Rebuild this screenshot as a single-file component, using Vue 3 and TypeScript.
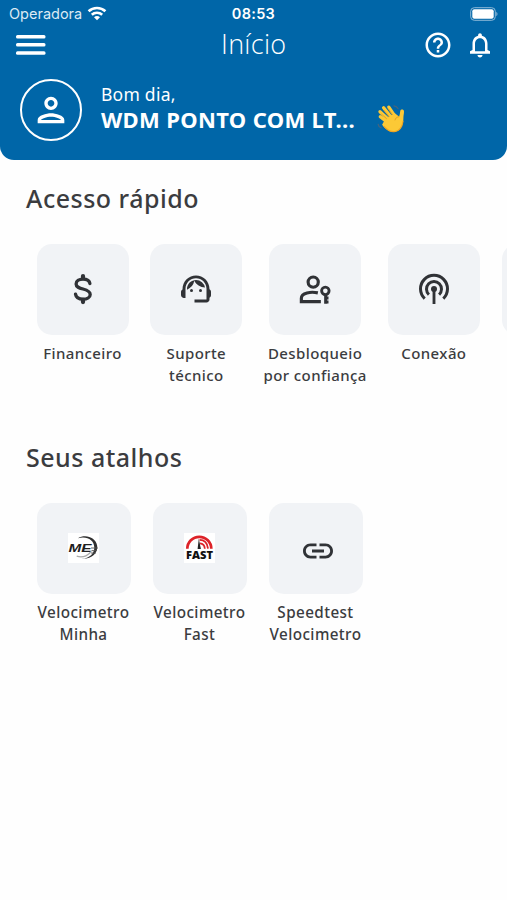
<script setup lang="ts">
type IconName = 'money' | 'agent' | 'personKey' | 'podcast' | 'me' | 'fast' | 'link'

interface Shortcut {
  icon: IconName
  lines: string[]
}

interface Section {
  title: string
  kind: 'quick' | 'links'
  items: Shortcut[]
}

const sections: Section[] = [
  {
    title: 'Acesso rápido',
    kind: 'quick',
    items: [
      { icon: 'money', lines: ['Financeiro'] },
      { icon: 'agent', lines: ['Suporte', 'técnico'] },
      { icon: 'personKey', lines: ['Desbloqueio', 'por confiança'] },
      { icon: 'podcast', lines: ['Conexão'] },
    ],
  },
  {
    title: 'Seus atalhos',
    kind: 'links',
    items: [
      { icon: 'me', lines: ['Velocimetro', 'Minha'] },
      { icon: 'fast', lines: ['Velocimetro', 'Fast'] },
      { icon: 'link', lines: ['Speedtest', 'Velocimetro'] },
    ],
  },
]
</script>

<template>
  <div class="screen">
    <header class="header">
      <div class="status">
        <div class="carrier">
          <span>Operadora</span>
          <svg width="20" height="15" viewBox="0 0 20 15" fill="none" stroke="#fff" stroke-width="2.6">
            <path d="M1.6 5.3C6.2.8 13.8.8 18.4 5.3" />
            <path d="M4.8 8.7c2.9-2.7 7.5-2.7 10.4 0" />
            <path d="M10 14.2l-3-3c1.7-1.5 4.3-1.5 6 0z" fill="#fff" stroke="none" />
          </svg>
        </div>
        <span class="clock">08:53</span>
        <svg class="battery" width="28" height="14" viewBox="0 0 28 14">
          <rect x=".7" y=".7" width="24.6" height="12.6" rx="3.6" fill="none" stroke="#8db9d8" stroke-width="1" />
          <rect x="2.3" y="2.3" width="21.4" height="9.4" rx="2" fill="#fff" />
          <path d="M26.3 4.8c1.6.7 1.6 3.7 0 4.4z" fill="#8db9d8" />
        </svg>
      </div>

      <div class="toolbar">
        <svg width="30" height="20" viewBox="0 0 30 20" fill="#fff">
          <rect width="29.5" height="3.4" rx="1.5" />
          <rect y="8.1" width="29.5" height="3.4" rx="1.5" />
          <rect y="16.3" width="29.5" height="3.4" rx="1.5" />
        </svg>
        <h1 class="title">Início</h1>
        <div class="actions">
          <svg width="30" height="30" viewBox="0 0 24 24" fill="#fff">
            <path d="M11 18h2v-2h-2v2zm1-16C6.48 2 2 6.48 2 12s4.48 10 10 10 10-4.48 10-10S17.52 2 12 2zm0 18c-4.41 0-8-3.59-8-8s3.59-8 8-8 8 3.59 8 8-3.59 8-8 8zm0-14c-2.21 0-4 1.79-4 4h2c0-1.1.9-2 2-2s2 .9 2 2c0 2-3 1.75-3 5h2c0-2.25 3-2.5 3-5 0-2.21-1.79-4-4-4z" />
          </svg>
          <svg width="30" height="30" viewBox="0 0 24 24" fill="#fff">
            <path d="M12 22c1.1 0 2-.9 2-2h-4c0 1.1.9 2 2 2zm6-6v-5c0-3.07-1.63-5.64-4.5-6.32V4c0-.83-.67-1.5-1.5-1.5s-1.5.67-1.5 1.5v.68C7.64 5.36 6 7.92 6 11v5l-2 1v2h16v-2l-2-1zm-2 1H8v-6c0-2.48 1.51-4.5 4-4.5s4 2.02 4 4.5v6z" />
          </svg>
        </div>
      </div>

      <div class="profile">
        <div class="avatar">
          <svg width="40" height="40" viewBox="0 0 24 24" fill="#fff">
            <path d="M12 6c1.1 0 2 .9 2 2s-.9 2-2 2-2-.9-2-2 .9-2 2-2m0 10c2.7 0 5.8 1.29 6 2H6c.23-.72 3.31-2 6-2m0-12C9.79 4 8 5.79 8 8s1.79 4 4 4 4-1.79 4-4-1.79-4-4-4zm0 10c-2.67 0-8 1.34-8 4v2h16v-2c0-2.66-5.33-4-8-4z" />
          </svg>
        </div>
        <div class="greeting">
          <span class="hello">Bom dia,</span>
          <span class="name">WDM PONTO COM LT...</span>
        </div>
        <svg class="wave" width="30" height="30" viewBox="0 0 30 30" fill="none" stroke-linecap="round">
          <path d="M17 1.8c2 .2 3.2 1.1 4 2.8M1.2 20.3c.3 1.8 1.2 2.9 2.9 3.5" stroke="#49647a" stroke-width="1.2" />
          <path d="M9.5 17.5L3.3 12.8M11 15L3 7.7M14 13L6.6 3.8M17.5 11.7L11.8 3.2" stroke="#fcc936" stroke-width="3.3" />
          <path d="M8 15.5L17.5 9l4.5 3.6c1-1.8.9-3.9 1.3-5.8.4-1.8 3.6-1.8 3.7.4.1 2.3-.6 4.2-.6 6.8 0 6.4-2.6 12.9-8.5 14-4.7.8-9.4-2.8-12.8-7.3z" fill="#fcc936" />
          <path d="M7 22.3c3.6 3.9 7.3 6 11 5.2 4.9-1 7.3-5.2 8-10.2" stroke="#efa522" stroke-width="1.1" />
          <path d="M9.5 14.6L4.6 10.2M12.1 12.3L7 6.3M15.5 10.7l-4-5.8M18 16c.3-1.8 1.7-3 4-3.3" stroke="#d99219" stroke-width=".7" />
        </svg>
      </div>
    </header>

    <main>
      <section v-for="section in sections" :key="section.title" class="section" :class="section.kind">
        <h2 class="heading">{{ section.title }}</h2>
        <div class="row">
          <div v-for="item in section.items" :key="item.icon" class="item">
            <div class="tile">
              <svg v-if="item.icon === 'money'" class="icon" viewBox="0 0 24 24" fill="none" stroke="#303236" stroke-linecap="round">
                <path d="M16.6 8.4C16.3 6.3 14.4 5.4 12 5.4c-2.7 0-4.6 1.2-4.6 3.2 0 2.1 2 2.7 4.6 3.4s4.8 1.4 4.8 3.6c0 2-2 3.2-4.8 3.2-2.6 0-4.6-1.1-5-3.4" stroke-width="2.2" />
                <path d="M12 3.4v1.4M12 19.3v1.4" stroke-width="2.8" />
              </svg>
              <svg v-else-if="item.icon === 'agent'" class="icon" viewBox="0 0 24 24" fill="#303236">
                <path d="M21 12.22C21 6.73 16.74 3 12 3c-4.69 0-9 3.65-9 9.28-.6.34-1 .98-1 1.72v2c0 1.1.9 2 2 2h1v-6.1c0-3.87 3.13-7 7-7s7 3.13 7 7V19h-8v2h8c1.1 0 2-.9 2-2v-1.22c.59-.31 1-.92 1-1.64v-2.3c0-.7-.41-1.31-1-1.62z" />
                <circle cx="9" cy="13" r="1" />
                <circle cx="15" cy="13" r="1" />
                <path d="M18 11.03A6.04 6.04 0 0 0 12.05 6c-3.03 0-6.29 2.51-6.03 6.45a8.075 8.075 0 0 0 4.86-5.89c1.31 2.63 4 4.44 7.12 4.47z" />
              </svg>
              <svg v-else-if="item.icon === 'personKey'" class="icon" viewBox="0 0 24 24" fill="none" stroke="#303236" stroke-width="2.1">
                <circle cx="10.8" cy="7.4" r="3.4" />
                <path d="M13.9 14.6c-4.6-1-11-.1-11 3.6v2.2h13" />
                <circle cx="18.9" cy="13.2" r="2.5" stroke-width="1.9" />
                <path d="M19.1 15.4v6.4M19 18h2M19 20.6h2" stroke-width="2" />
              </svg>
              <svg v-else-if="item.icon === 'podcast'" class="icon" viewBox="0 0 24 24" fill="none" stroke="#303236" stroke-width="2">
                <path d="M5.8 18.4A9 9 0 1 1 18.2 18.4" />
                <path d="M8.6 15.7A5 5 0 1 1 15.4 15.7" />
                <path d="M12 12v10" stroke-width="1.9" />
                <circle cx="12" cy="12" r="2" fill="#303236" stroke="none" />
              </svg>
              <svg v-else-if="item.icon === 'me'" class="logo" viewBox="0 0 31 30">
                <rect width="31" height="30" fill="#fff" />
                <path d="M10 5.2C17 .8 28 4 29.2 13c.8 7-5.6 13.5-15.7 12.8 8.2-.7 13-5.3 12.8-11.6C26 7 19 2.7 10 5.2z" fill="#303030" />
                <path d="M8.7 23.2c6.8 2 12.7-1 15-6" fill="none" stroke="#aaa" stroke-width="1.4" />
                <text x=".5" y="19" font-size="10" font-weight="700" font-style="italic" font-family="Liberation Sans, sans-serif" textLength="23" lengthAdjust="spacingAndGlyphs" fill="#202020">ME</text>
                <path d="M23 15h7M24 17.6h5M23 20h5" stroke="#555" stroke-width=".9" />
              </svg>
              <svg v-else-if="item.icon === 'fast'" class="logo" viewBox="0 0 31 30">
                <rect width="31" height="30" fill="#fff" />
                <g fill="none" stroke="#dd2228">
                  <path d="M3.3 15.8a12 12 0 0 1 24 0" stroke-width="2.7" />
                  <path d="M15.5 6.9c4.8 0 8 3.4 8.5 8.8M16 10.4c2.6.2 4.6 2 4.8 5.3" stroke-width="1.8" />
                </g>
                <path d="M14.8 5.8l2.1 10.2h-3.3z" fill="#222" />
                <text x="2" y="25.5" font-size="10.5" font-weight="800" font-family="Open Sans, sans-serif" textLength="27" lengthAdjust="spacingAndGlyphs" fill="#111">FAST</text>
              </svg>
              <svg v-else class="icon link" viewBox="0 0 24 24" fill="#303236">
                <path d="M3.9 12c0-1.71 1.39-3.1 3.1-3.1h4V7H7c-2.76 0-5 2.24-5 5s2.24 5 5 5h4v-1.9H7c-1.71 0-3.1-1.39-3.1-3.1zM8 13h8v-2H8v2zm9-6h-4v1.9h4c1.71 0 3.1 1.39 3.1 3.1s-1.39 3.1-3.1 3.1h-4V17h4c2.76 0 5-2.24 5-5s-2.24-5-5-5z" />
              </svg>
            </div>
            <div class="label">
              <span v-for="line in item.lines" :key="line">{{ line }}</span>
            </div>
          </div>
          <div v-if="section.kind === 'quick'" class="item">
            <div class="tile"></div>
          </div>
        </div>
      </section>
    </main>
  </div>
</template>

<style>
body {
  background: #fff;
}
</style>

<style scoped>
.screen {
  width: 507px;
  height: 900px;
  overflow: hidden;
  background: #fefefe;
  color: #3b3c3f;
  font-family: "Noto Sans", "Open Sans", sans-serif;
}

svg {
  display: block;
  flex: none;
}

.header {
  box-sizing: border-box;
  height: 159.5px;
  background: #0066a8;
  color: #fff;
  border-radius: 0 0 14px 14px;
}

.status {
  display: grid;
  grid-template-columns: 1fr auto 1fr;
  align-items: center;
  height: 27px;
  padding: 0 9px;
  font-family: Inter, sans-serif;
}

.carrier {
  display: flex;
  align-items: center;
  gap: 5px;
  font-size: 14.5px;
  color: #dceaf4;
}

.clock {
  font-size: 14.5px;
  font-weight: 600;
  letter-spacing: 0.3px;
}

.battery {
  justify-self: end;
}

.toolbar {
  display: grid;
  grid-template-columns: 1fr auto 1fr;
  align-items: center;
  height: 36px;
  padding: 0 12.5px 0 16px;
}

.title {
  margin: 0;
  padding: 0 3px 2px 0;
  font-family: "Open Sans", "Noto Sans", sans-serif;
  font-size: 27px;
  line-height: 34px;
  font-weight: 350;
  letter-spacing: 0.3px;
}

.actions {
  display: flex;
  justify-content: flex-end;
  gap: 12px;
}

.profile {
  display: flex;
  align-items: center;
  padding: 15.5px 20px 0;
}

.avatar {
  display: flex;
  align-items: center;
  justify-content: center;
  box-sizing: border-box;
  width: 62px;
  height: 62px;
  border: 2.4px solid #fff;
  border-radius: 50%;
}

.greeting {
  display: flex;
  flex-direction: column;
  width: 276px;
  margin-left: 19px;
  padding-bottom: 5px;
  white-space: nowrap;
}

.hello {
  font-size: 17.5px;
  line-height: 23px;
  letter-spacing: 0.25px;
}

.name {
  font-size: 22px;
  line-height: 26px;
  font-weight: 700;
  letter-spacing: 0.35px;
}

.wave {
  margin-top: 18px;
}

.section {
  padding-left: 26px;
}

.quick {
  height: 259px;
}

.heading {
  margin: 0;
  padding-top: 20px;
  height: 64px;
  font-size: 25px;
  line-height: 36px;
  font-weight: 500;
  letter-spacing: 0.5px;
}

.row {
  display: flex;
  align-items: flex-start;
  gap: 22px;
  padding-left: 10.5px;
}

.quick .row {
  gap: 21.8px;
}

.item {
  display: flex;
  flex: none;
  flex-direction: column;
  align-items: center;
  width: 92px;
}

.quick .item:nth-child(3) {
  width: 102px;
}

.links .item {
  width: 94px;
}

.tile {
  display: flex;
  align-items: center;
  justify-content: center;
  width: 92px;
  height: 91.5px;
  border-radius: 15px;
  background: #f1f3f6;
}

.links .tile {
  width: 94px;
}

.icon {
  width: 36px;
  height: 36px;
}

.link {
  margin: 6px 0 0 5px;
}

.logo {
  width: 31px;
  height: 30px;
}

.label {
  display: flex;
  flex-direction: column;
  align-items: center;
  margin-top: 6.5px;
  font-size: 15.25px;
  line-height: 22px;
  font-weight: 500;
  letter-spacing: 0.4px;
  white-space: nowrap;
}

.quick .label {
  font-size: 15px;
}
</style>
